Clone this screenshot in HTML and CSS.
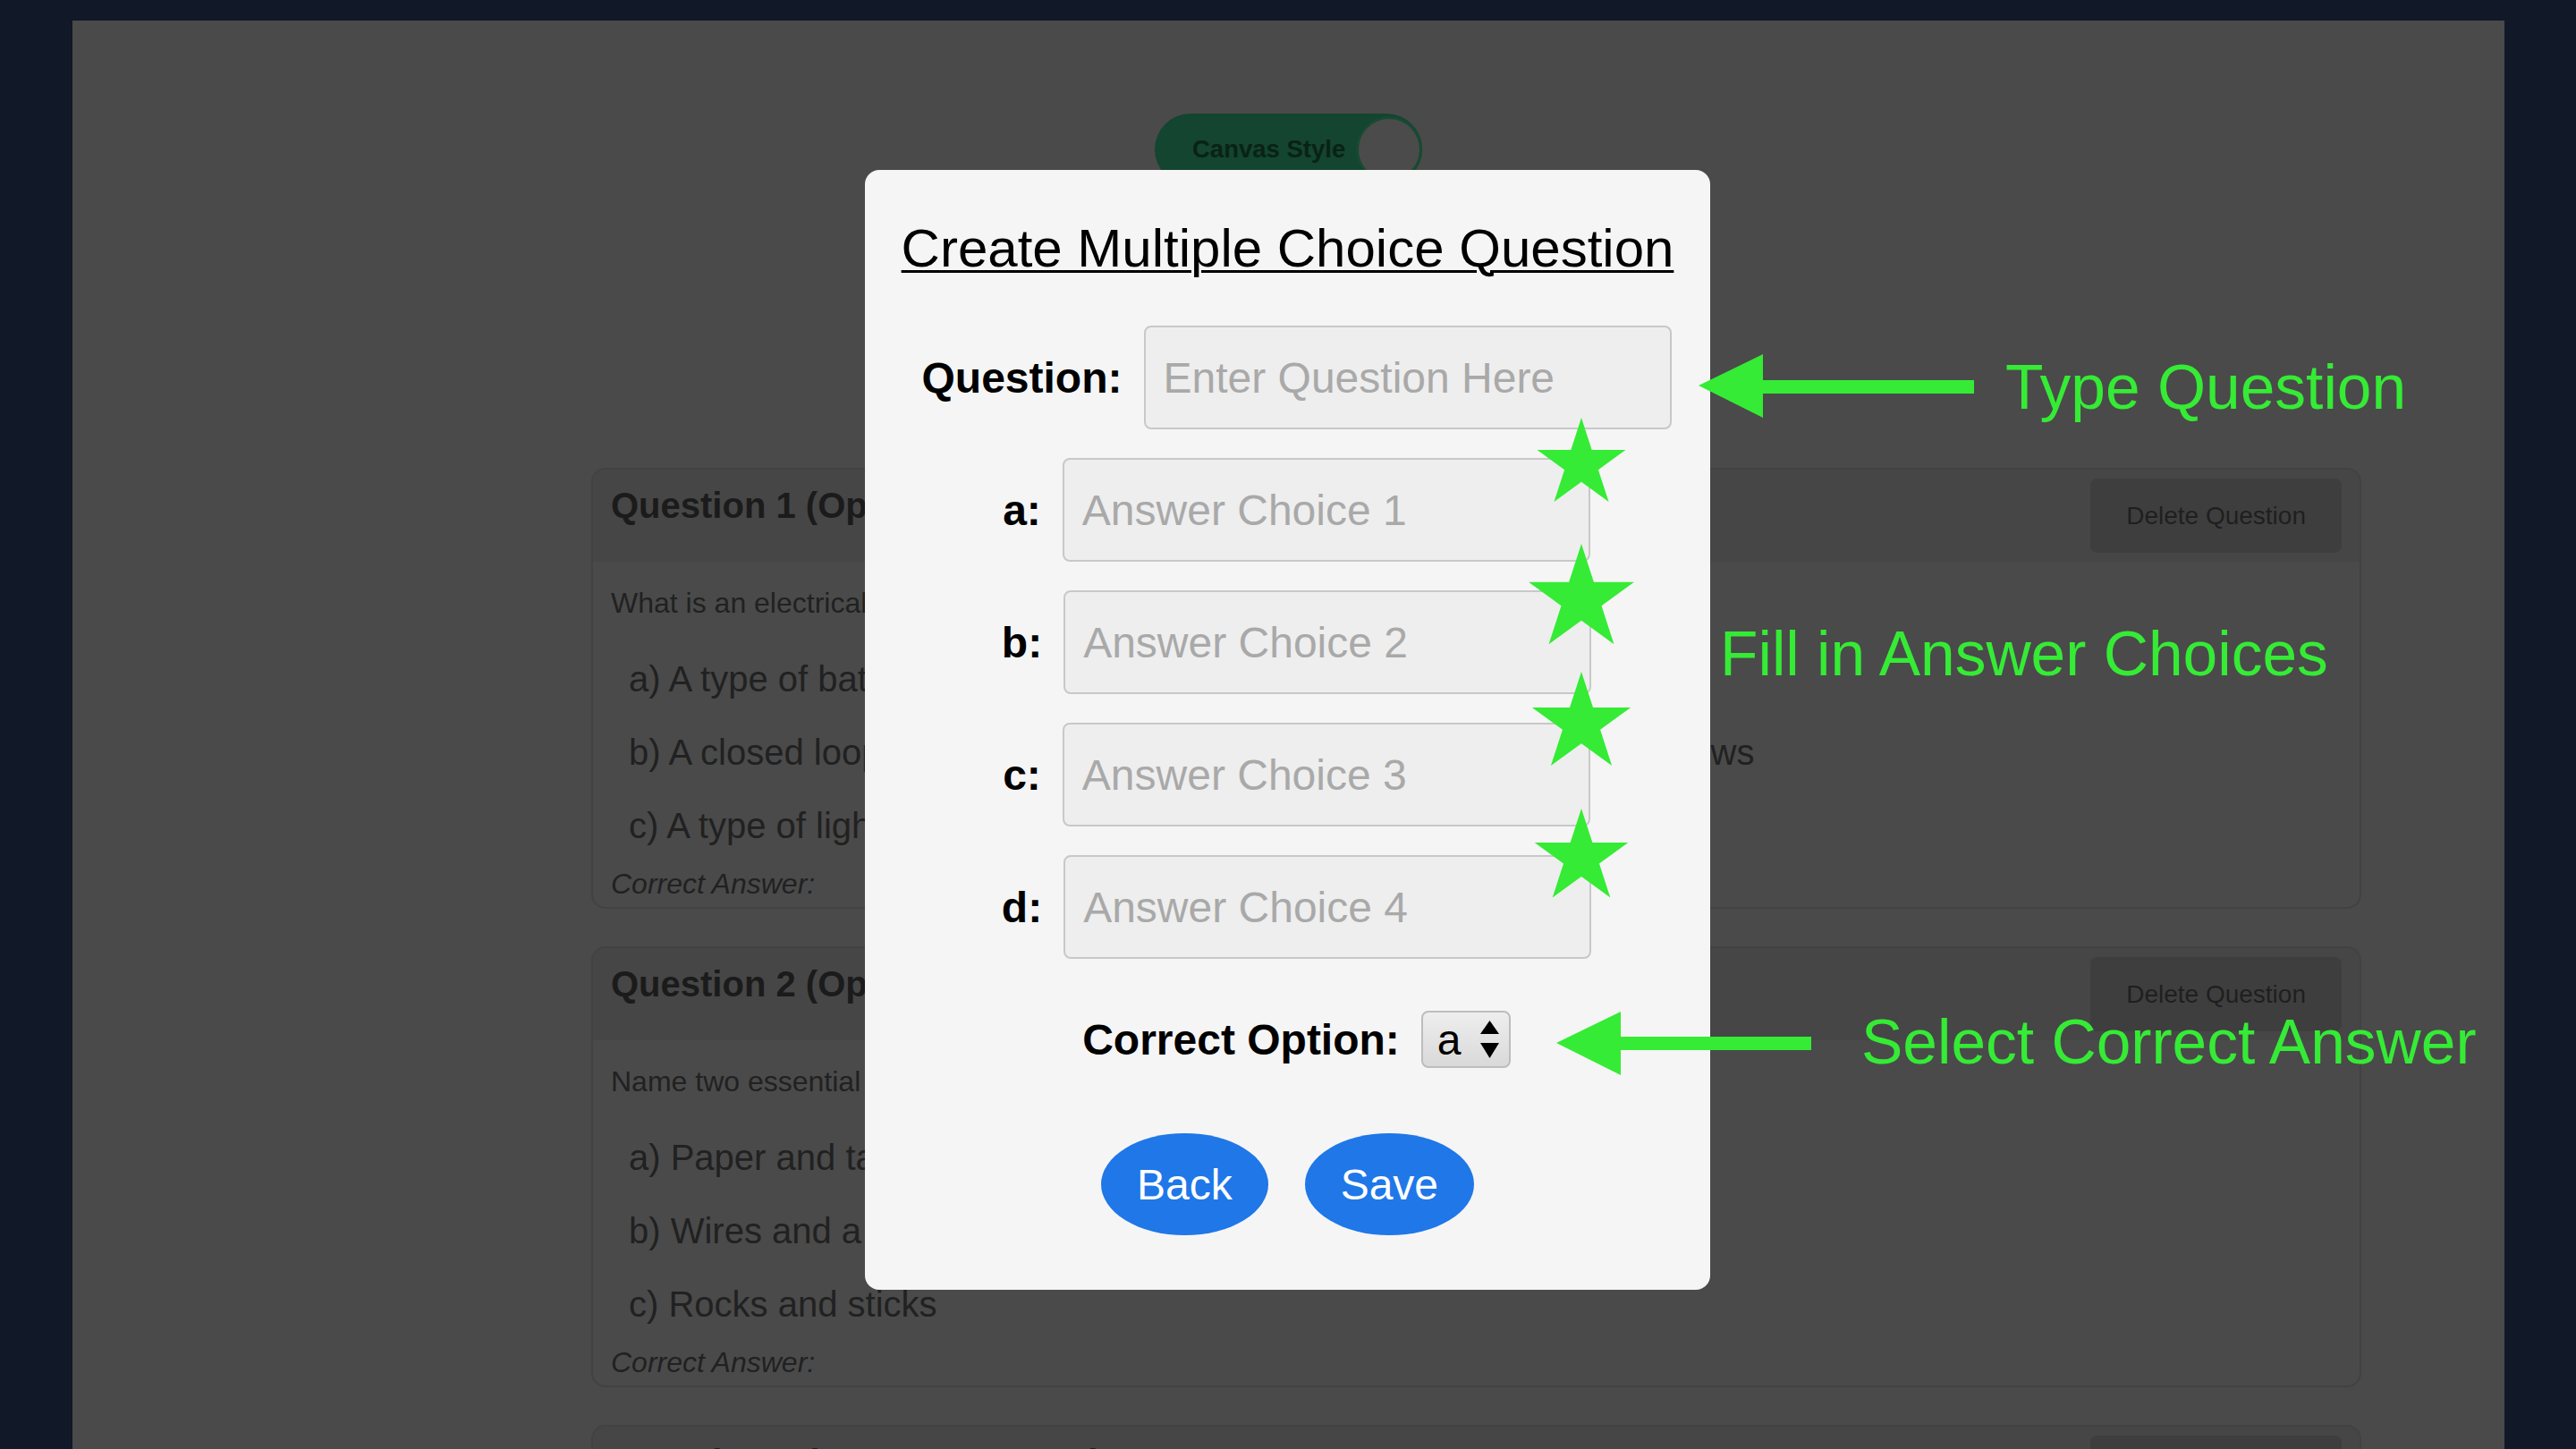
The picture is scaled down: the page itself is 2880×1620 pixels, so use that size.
FILE: index.html
```html
<!DOCTYPE html>
<html lang="en">
<head>
<meta charset="utf-8">
<title>Create Multiple Choice Question</title>
<link rel="stylesheet" href="styles.css">
</head>
<body>
<div class="page">
  <div class="toolbar">
    <div class="toggle"><span class="toggle-label">Canvas Style</span><span class="knob"></span></div>
  </div>
  <div class="questions">
    <section class="qcard">
      <header class="qhead"><h3>Question 1 (Options)</h3><button class="del">Delete Question</button></header>
      <div class="qbody">
        <p class="qtext">What is an electrical circuit?</p>
        <ul class="opts">
          <li>a) A type of battery</li>
          <li>b) A closed loop or complete path through which electrical current flows</li>
          <li>c) A type of light bulb</li>
        </ul>
        <p class="answer">Correct Answer:</p>
      </div>
    </section>
    <section class="qcard">
      <header class="qhead"><h3>Question 2 (Options)</h3><button class="del">Delete Question</button></header>
      <div class="qbody">
        <p class="qtext">Name two essential parts of a circuit.</p>
        <ul class="opts">
          <li>a) Paper and tape</li>
          <li>b) Wires and a battery</li>
          <li>c) Rocks and sticks</li>
        </ul>
        <p class="answer">Correct Answer:</p>
      </div>
    </section>
    <section class="qcard">
      <header class="qhead"><h3>Question 3 (Open Response)</h3><button class="del">Delete Question</button></header>
      <div class="qbody">
        <p class="qtext">Explain how a switch controls a circuit.</p>
      </div>
    </section>
  </div>
</div>

<div class="modal">
  <h2>Create Multiple Choice Question</h2>
  <div class="field q-field"><label>Question:</label><input type="text" placeholder="Enter Question Here"></div>
  <div class="field"><label>a:</label><input type="text" placeholder="Answer Choice 1"></div>
  <div class="field"><label>b:</label><input type="text" placeholder="Answer Choice 2"></div>
  <div class="field"><label>c:</label><input type="text" placeholder="Answer Choice 3"></div>
  <div class="field"><label>d:</label><input type="text" placeholder="Answer Choice 4"></div>
  <div class="correct">
    <label>Correct Option:</label>
    <span class="select-wrap">
      <select><option>a</option><option>b</option><option>c</option><option>d</option></select>
      <svg viewBox="0 0 21 42" aria-hidden="true"><polygon points="10.5,0 21,15 0,15" fill="#000"/><polygon points="0,25 21,25 10.5,42" fill="#000"/></svg>
    </span>
  </div>
  <div class="actions"><button class="pill-btn">Back</button><button class="pill-btn">Save</button></div>
</div>

<div class="annotations">
  <svg class="annot-svg" width="2880" height="1620" viewBox="0 0 2880 1620" aria-hidden="true">
    <defs>
      <polygon id="star" points="0,-100 22.45,-30.9 95.11,-30.9 36.33,11.8 58.78,80.9 0,38.2 -58.78,80.9 -36.33,11.8 -95.11,-30.9 -22.45,-30.9"/>
    </defs>
    <g fill="#35eb35">
      <use href="#star" transform="translate(1768 519) scale(0.52)"/>
      <use href="#star" transform="translate(1768 670) scale(0.62)"/>
      <use href="#star" transform="translate(1768 809) scale(0.58)"/>
      <use href="#star" transform="translate(1768 959) scale(0.55)"/>
      <polygon points="1899,431 1971,396 1971,425 2207,425 2207,440 1971,440 1971,467"/>
      <polygon points="1740,1166 1812,1131 1812,1159 2025,1159 2025,1174 1812,1174 1812,1202"/>
    </g>
  </svg>
  <div class="note note-type">Type Question</div>
  <div class="note note-fill">Fill in Answer Choices</div>
  <div class="note note-select">Select Correct Answer</div>
</div>
</body>
</html>
```
FILE: styles.css
```css
* { box-sizing: border-box; }
html, body { margin: 0; height: 1620px; overflow: hidden; }
body {
  background: #111827;
  font-family: "Liberation Sans", Arial, sans-serif;
}

/* dimmed page behind the modal */
.page {
  margin: 23px 80px 0 81px;
  height: 1597px;
  background: #4a4a4a;
  overflow: hidden;
}
.toolbar { display: flex; justify-content: center; padding-top: 104px; }
.toggle {
  width: 299px; height: 80px; border-radius: 40px;
  background: #134530;
  display: flex; align-items: center;
  padding-left: 42px;
}
.toggle-label { flex: 1; font-weight: 700; font-size: 27.5px; color: #0a2216; }
.knob {
  width: 74px; height: 74px; border-radius: 50%;
  border: 3px solid #164a33;
  background: #4b4b4b;
}

.questions { margin-top: 316px; padding: 0 160px 0 580px; }
.qcard {
  border: 2px solid #424242; border-radius: 16px;
  overflow: hidden; margin-bottom: 42px;
  background: #4a4a4a;
}
.qhead {
  display: flex; justify-content: space-between; align-items: flex-start;
  padding: 10px 20px;
  background: #464646;
}
.qhead h3 { margin: 7px 0 0; font-size: 40px; line-height: 46px; font-weight: 700; color: #1b1b1b; white-space: nowrap; }
.del {
  height: 83px; padding: 0 40px;
  border: none; border-radius: 8px;
  background: #3e3e3e; color: #1f1f1f;
  font: 28px "Liberation Sans", Arial, sans-serif;
}
.qbody { padding: 0 20px 7px; color: #212121; }
.qtext { margin: 28px 0 0; font-size: 32px; line-height: 37px; white-space: nowrap; }
.opts { list-style: none; margin: 43px 0 0; padding: 0 0 0 20px; }
.opts li { font-size: 40px; line-height: 46px; margin-bottom: 36px; white-space: nowrap; }
.opts li:last-child { margin-bottom: 0; }
.answer { margin: 24px 0 0; font-style: italic; font-size: 32px; line-height: 37px; }

/* modal */
.modal {
  position: fixed; left: 967px; top: 190px;
  width: 945px; height: 1252px;
  background: #f5f5f5; border-radius: 16px;
  padding-top: 53px;
}
.modal h2 {
  margin: 0; text-align: center;
  font-size: 60px; line-height: 69px; font-weight: 400; color: #000;
  text-decoration: underline; text-decoration-thickness: 3px; text-underline-offset: 4px;
}
.field, .correct {
  display: flex; justify-content: center; align-items: center;
  gap: 24px; padding-left: 20px;
}
.q-field { margin-top: 52px; }
.field + .field { margin-top: 32px; }
.field label, .correct label { font-weight: 700; font-size: 48px; color: #000; }
.field input {
  width: 590px; height: 116px; padding: 0 20px;
  border: 2px solid #c8c8c8; border-radius: 8px;
  background: #eeeeee; color: #000;
  font: 48px "Liberation Sans", Arial, sans-serif;
}
.field input::placeholder { color: #a9a9a9; }
.correct { margin-top: 58px; }
.select-wrap { position: relative; display: block; }
.select-wrap select {
  display: block; appearance: none; -webkit-appearance: none;
  width: 100px; height: 64px; padding: 0 0 0 16px;
  border: 2px solid #bdbdbd; border-radius: 8px;
  background: linear-gradient(#eeeeee, #d9d9d9);
  color: #000; font: 48px "Liberation Sans", Arial, sans-serif;
}
.select-wrap svg { position: absolute; left: 66px; top: 11px; width: 21px; height: 42px; pointer-events: none; }
.actions { display: flex; justify-content: center; gap: 41px; margin-top: 73px; }
.pill-btn {
  height: 114px; padding: 0 40px;
  border: none; border-radius: 50%;
  background: #1f77e8; color: #fff;
  font: 48px "Liberation Sans", Arial, sans-serif;
}

/* tutorial annotations */
.annotations { position: fixed; left: 0; top: 0; width: 2880px; height: 1620px; pointer-events: none; }
.annot-svg { position: absolute; left: 0; top: 0; }
.note {
  position: absolute; white-space: nowrap;
  font-size: 69.5px; line-height: 69.5px; color: #35eb35;
}
.note-type { left: 2242px; top: 399px; }
.note-fill { left: 1923px; top: 697px; }
.note-select { left: 2081px; top: 1131px; }
```
